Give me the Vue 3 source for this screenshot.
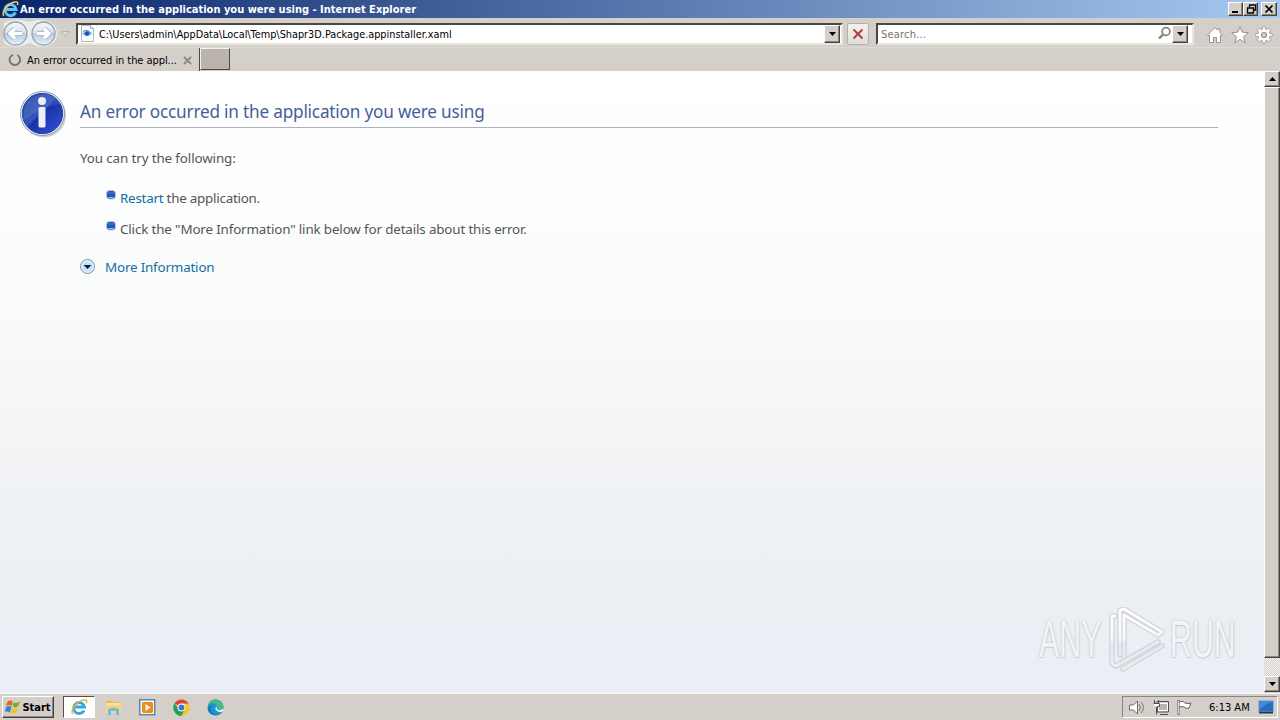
<script setup>
const teeth = [0, 45, 90, 135, 180, 225, 270, 315]
const suggestions = [
  { link: 'Restart', text: ' the application.' },
  { link: '', text: 'Click the "More Information" link below for details about this error.' },
]
</script>

<template>
  <div class="screen">
    <header class="titlebar">
      <svg class="title-ie" width="18" height="18" viewBox="0 0 18 18">
        <path d="M14.5 12.5A5.500 5.500 0 1 1 15 9.500H5" fill="none" stroke="#62c2f4" stroke-width="3" />
        <path d="M3 16C-1 13 8 1 16 2c1 0 1 2 0 3" fill="none" stroke="#f5cf45" stroke-width="1.5" />
      </svg>
      <span class="title-text">An error occurred in the application you were using - Internet Explorer</span>
      <div class="win-buttons">
        <button class="raised win"><svg width="14" height="12"><path d="M3 9h6" stroke="#000" stroke-width="2" /></svg></button>
        <button class="raised win"><svg width="14" height="12"><path d="M5.500 4V2h6v5h-2M5 2h7M3.500 5h6v5h-6zM3 5h7" fill="none" stroke="#000" stroke-width="1.3" /></svg></button>
        <button class="raised win close"><svg width="14" height="12"><path d="M3.500 2.500l7 7m0-7l-7 7" stroke="#000" stroke-width="1.7" /></svg></button>
      </div>
    </header>

    <div class="toolbar">
      <svg class="nav" width="74" height="29" viewBox="0 0 74 29">
        <defs>
          <linearGradient id="navFill" x2="0" y2="1">
            <stop stop-color="#f7f8fa" /><stop offset=".48" stop-color="#dce1e8" />
            <stop offset=".5" stop-color="#bbcbdc" /><stop offset="1" stop-color="#e3f2fb" />
          </linearGradient>
        </defs>
        <path d="M4 5Q15-1 29 4Q44-1 54 7Q61 17 53 25Q43 32 30 25Q15 32 4 25" fill="#eeeded" />
        <g fill="url(#navFill)" stroke="#8ba3b7" stroke-width="1.3">
          <circle cx="15.500" cy="15.500" r="11.500" /><circle cx="43.500" cy="15.500" r="11.500" />
        </g>
        <g fill="none" stroke="#91a7bc" stroke-width="5"><path d="M22 15.500H10m5-5-5 5 5 5M37 15.500h12m-5-5 5 5-5 5" /></g>
        <g fill="none" stroke="#fff" stroke-width="3.600"><path d="M22 15.500H10m5-5-5 5 5 5M37 15.500h12m-5-5 5 5-5 5" /></g>
        <path d="M61.500 13.500h8l-4 5z" fill="#dedbd5" stroke="#b8b5ae" />
      </svg>
      <div class="field address">
        <svg width="16" height="17" viewBox="0 0 16 17">
          <path d="M2.500.500h9l3 3v13h-12z" fill="#f8fbff" stroke="#a8b5c2" />
          <path d="M11.500.500v3h3" fill="#dce8f3" stroke="#a8b5c2" />
          <path d="M3 8.500q5-5 10 0-5 5-10 0" fill="#78b7e8" /><circle cx="8" cy="8.500" r="2.200" fill="#1756a9" />
          <path d="M4 6.500q5-3 8 2" fill="none" stroke="#3c86cf" />
        </svg>
        <span class="address-text">C:\Users\admin\AppData\Local\Temp\Shapr3D.Package.appinstaller.xaml</span>
        <button class="raised drop"><svg width="7" height="4"><path d="M0 0h7L3.500 4z" /></svg></button>
      </div>
      <button class="stop"><svg width="12" height="12"><path d="M1.500 1.500l9 9m0-9l-9 9" stroke="#b83d40" stroke-width="2" /></svg></button>
      <div class="field search">
        <span class="search-text">Search...</span>
        <svg class="lens" width="15" height="15"><circle cx="9" cy="5.500" r="3.900" fill="none" stroke="#85817d" stroke-width="1.700" /><path d="M6 8.500l-4 4" stroke="#85817d" stroke-width="2.400" /></svg>
        <button class="raised drop"><svg width="7" height="4"><path d="M0 0h7L3.500 4z" /></svg></button>
      </div>
      <div class="commands">
        <svg width="18" height="18" viewBox="0 0 18 18"><path d="M1.500 9 9 1.500l2.500 2.600V3h2.500v3.500L16.500 9l-1 1-1-.8v7.300h-4v-5h-3v5h-4V9.200l-1 .8z" fill="#fff" stroke="#969391" /></svg>
        <svg width="18" height="18" viewBox="0 0 18 18"><path d="M9 .8l2.300 5.400 6 .5-4.600 4 1.500 6L9 13.400l-5.200 3.300 1.500-6-4.600-4 6-.5z" fill="#fff" stroke="#969391" /></svg>
        <svg width="18" height="18" viewBox="0 0 18 18">
          <g fill="#fff" stroke="#969391" stroke-width=".9"><rect v-for="a in teeth" :key="a" x="7.300" y=".8" width="3.400" height="4" rx=".8" :transform="`rotate(${a} 9 9)`" /></g>
          <circle cx="9" cy="9" r="5.500" fill="#fff" /><circle cx="9" cy="9" r="2.500" fill="#d5cfca" stroke="#969391" stroke-width="1.200" />
        </svg>
      </div>
    </div>

    <div class="tabs">
      <div class="tab">
        <svg width="14" height="14"><path d="M5 1.800A5.300 5.300 0 1 0 9.200 2" fill="none" stroke="#77736f" stroke-width="1.900" /></svg>
        <span class="tab-text">An error occurred in the appl...</span>
        <svg class="tab-close" width="9" height="9"><path d="M1 1l7 7m0-7l-7 7" stroke="#8e8984" stroke-width="2" /></svg>
      </div>
      <div class="new-tab"></div>
    </div>

    <div class="viewport">
      <main class="page">
        <svg class="info" width="50" height="50" viewBox="0 0 50 50">
          <defs><linearGradient id="infoFill" x2="1" y2="1"><stop stop-color="#2a438f" /><stop offset=".45" stop-color="#3157bd" /><stop offset=".5" stop-color="#1a30a8" /><stop offset="1" stop-color="#3556e0" /></linearGradient></defs>
          <circle cx="24" cy="24.500" r="22" fill="#aaa" opacity=".55" /><circle cx="22.500" cy="22.500" r="22" fill="#f5f8ff" stroke="#8396ba" />
          <circle cx="22.500" cy="22.500" r="20.200" fill="url(#infoFill)" stroke="#244694" />
          <path d="M4 29C1 12 13 3 24 3c9 0 14 5 17 10Q26 14 4 29" fill="#7894da" opacity=".25" />
          <circle cx="22" cy="10" r="4" fill="#eeeff5" /><rect x="18.500" y="16" width="7" height="20.500" rx="1.500" fill="#eeeff5" />
        </svg>
        <div class="content">
          <h1><span>An error occurred in the application you were using</span></h1>
          <p class="intro"><span>You can try the following:</span></p>
          <ul>
            <li v-for="(item, i) in suggestions" :key="i">
              <svg width="10" height="10"><rect x=".5" y=".5" width="9" height="8.500" rx="3" fill="#2455ba" stroke="#b7c9e6" /><path d="M2 3h6" stroke="#4c85d1" /><path d="M2.500 7.500h5" stroke="#86c9f4" /></svg>
              <span :class="i ? 'second' : 'first'"><a v-if="item.link">{{ item.link }}</a>{{ item.text }}</span>
            </li>
          </ul>
          <div class="more">
            <svg width="16" height="16"><circle cx="7.500" cy="7.500" r="7" fill="#c9e2f7" stroke="#758dab" /><circle cx="7.500" cy="7.500" r="5.800" fill="none" stroke="#eff8ff" /><path d="M3.500 6h8l-4 4z" fill="#071f45" /></svg>
            <a>More Information</a>
          </div>
        </div>
      </main>
      <div class="scrollbar">
        <button class="raised arrow"><svg width="7" height="4"><path d="M0 4h7L3.500 0z" /></svg></button>
        <div class="raised thumb"></div><div class="track"></div>
        <button class="raised arrow"><svg width="7" height="4"><path d="M0 0h7L3.500 4z" /></svg></button>
      </div>
      <div class="watermark">
        <span>ANY</span>
        <svg width="60" height="66" viewBox="0 0 60 66">
          <defs><linearGradient id="markFill" gradientUnits="userSpaceOnUse" x1="0" y1="0" x2="0" y2="66"><stop stop-color="#fff" /><stop offset=".5" stop-color="#f7f8fa" /><stop offset=".56" stop-color="#e7e8ed" /><stop offset="1" stop-color="#eff0f4" /></linearGradient></defs>
          <g fill="none" stroke-linecap="round" stroke-linejoin="round">
            <path d="M8 9H5v48l4 2 42-24M13 48V3l4-1 38 23-4 3-34-20v42M16 62l39-23" stroke="#d2d4da" stroke-width="5.500" />
            <path d="M8 9H5v48l4 2 42-24M13 48V3l4-1 38 23-4 3-34-20v42M16 62l39-23" stroke="url(#markFill)" stroke-width="2.800" />
          </g>
        </svg>
        <span>RUN</span>
      </div>
    </div>

    <footer class="taskbar">
      <button class="raised start">
        <svg width="17" height="16" viewBox="0 0 17 16"><path d="M3 2q3-2 5 0L7 7Q4 5 1 7z" fill="#e96124" /><path d="M9 3q3 2 7-1l-2 5q-3 3-6 0z" fill="#78ae28" /><path d="M1 8q3-2 6 0l-2 6q-2-2-5-1z" fill="#3487d1" /><path d="M8 9q3 2 6-1l-2 6q-3 2-6 0z" fill="#f5bd20" /></svg>
        <span>Start</span>
      </button>
      <div class="task active"><svg width="18" height="18" viewBox="0 0 18 18"><path d="M14 12.500A5.500 5.500 0 1 1 14.500 9H5" fill="none" stroke="#35a6e2" stroke-width="2.800" /><path d="M3 16C-1 13 8 1 16 2c1 0 1 2 0 3" fill="none" stroke="#e7b52d" stroke-width="1.500" /></svg></div>
      <div class="task"><svg width="17" height="17" viewBox="0 0 17 17"><path d="M1 4V2h6l1 1h6v3H1z" fill="#e7b85d" /><path d="M1 4h15v10H1z" fill="#f4d77e" /><path d="M3 16v-6q5-3 11 0v6h-3v-4H6v4z" fill="#73bdd9" /><path d="M2 5h13" stroke="#fff1ae" /></svg></div>
      <div class="task"><svg width="17" height="17"><rect x=".75" y=".75" width="15" height="15" fill="#edf3f7" stroke="#467fa9" stroke-width="1.300" /><rect x="3" y="3" width="11" height="11" rx="2" fill="#f18b16" /><path d="M6.500 5v7l5-3.500z" fill="#fff" /></svg></div>
      <div class="task"><svg width="17" height="17" viewBox="0 0 18 18"><path d="M9 9 1.500 4.500A9 9 0 0 1 16.700 5H9z" fill="#df443b" /><path d="M9 9h-4L1.500 4.500A9 9 0 0 0 8.700 18L13 11z" fill="#26a052" /><path d="M9 5h7.700A9 9 0 0 1 8.700 18L13 11z" fill="#f7c525" /><circle cx="9" cy="9" r="4.200" fill="#fff" /><circle cx="9" cy="9" r="3.200" fill="#4075cd" /></svg></div>
      <div class="task"><svg width="17" height="17" viewBox="0 0 18 18"><circle cx="9" cy="9" r="8.500" fill="#147cc2" /><path d="M1 8C2-1 16-2 17.500 8c0 4-5 5-7 3 3-3-2-7-9.500-3" fill="#46bd80" /><path d="M1 8C4 2 11 5 11 9c-3-1-3 4 2 5 2 0 3-.5 4-1-4 5-12 5-13-2Q4 8 6 7 3 6 1 8" fill="#1598ce" /><path d="M10 8q-3 3 1 5 3 2 6 0 1-2 0-3-3 3-6 1" fill="#e7edf0" /></svg></div>
      <div class="tray">
        <svg class="speaker" width="18" height="17"><path d="M1.500 6h4l4-4v13l-4-4h-4z" fill="#fff" stroke="#6d6b68" /><path d="M11 5q3 3.500 0 7M13 3q5 5.500 0 11" fill="none" stroke="#77736f" /></svg>
        <svg class="network" width="18" height="17"><rect x="6.500" y="4.500" width="9" height="7" fill="#b8b6b2" stroke="#fff" /><path d="M5 2.500h11.500V13H6M8 15.500h8M2.500 1v3h4V1M1.500 4.500h6v3h-2v6M4.500 8v7.500" fill="none" stroke="#55534f" /><path d="M2 5h5v2H2z" fill="#fff" /></svg>
        <svg class="flag" width="17" height="17"><path d="M3 3q4-2 6 1 3 1 6 0l-2 5q-3 1-5-1-3-1-5 0" fill="#fff" stroke="#65615d" /><path d="M2.500 1v15" stroke="#65615d" stroke-width="2" /><path d="M2.500 2v13" stroke="#fff" stroke-width=".7" /></svg>
        <span class="time">6:13 AM</span>
        <svg class="desktop" width="16" height="14"><rect x=".5" y=".5" width="15" height="11" fill="#286bc2" stroke="#9db5d0" /><path d="M1 11Q7 3 15 2V1H1z" fill="#4289d8" /><path d="M1 12.500h14" stroke="#173763" stroke-width="2" /></svg>
      </div>
    </footer>
  </div>
</template>

<style>
html, body { margin: 0; overflow: hidden; }
</style>

<style scoped>
* { box-sizing: border-box; }
svg { display: block; flex: none; }
.screen { width: 1280px; height: 720px; display: flex; flex-direction: column; background: #d5cfc9; font: 11px "DejaVu Sans Condensed", "DejaVu Sans", sans-serif; font-stretch: condensed; color: #000; }
button { margin: 0; padding: 0; border-radius: 0; font: inherit; display: flex; align-items: center; justify-content: center; }
.raised { background: #d5cfc9; border: 1px solid; border-color: #fff #45423f #45423f #fff; box-shadow: inset -1px -1px #8b8681; }
.titlebar { height: 18px; display: flex; align-items: center; background: linear-gradient(90deg, #0a246a, #a6caf0); color: #fff; flex: none; }
.title-ie { width: 18px; margin-left: 1px; }
.title-text { width: 397px; font-weight: 700; white-space: nowrap; margin-left: 1px; letter-spacing: .005px; }
.win-buttons { display: flex; margin-left: auto; margin-right: 3px; }
.win { width: 15px; height: 14px; }
.close { margin-left: 3px; width: 16px; }
.toolbar { height: 29px; display: flex; align-items: center; flex: none; }
.nav { margin-right: 2px; }
.field { height: 22px; display: flex; align-items: center; background: #fff; border: 2px solid; border-color: #4b4741 #e9e5df #e9e5df #4b4741; margin-top: 2px; white-space: nowrap; }
.address { width: 767px; padding-left: 1px; }
.address-text { margin: 1px 0 0 4px; font-size: 10.82px; }
.drop { width: 16px; height: 18px; margin-left: auto; }
.address .drop { margin-right: 1px; }
.stop { width: 22px; height: 22px; margin: 2px 7px 0 4px; background: linear-gradient(#f3f1ee, #e1deda); border: 1px solid #b6b0aa; border-radius: 2px; }
.search { width: 318px; padding-left: 3px; padding-right: 4px; color: #77736f; }
.search-text { margin-top: 1px; letter-spacing: .2px; }
.lens { margin-left: auto; }
.search .drop { margin-left: 0; }
.commands { display: flex; margin: 5px 0 0 12px; gap: 6.5px; }
.tabs { height: 24px; flex: none; display: flex; border-top: 1px solid #ded9d4; }
.tab { display: flex; align-items: center; width: 200px; padding-left: 8px; border-right: 1px solid #4b4744; }
.tab-text { width: 156px; margin: 1px 0 0 5px; white-space: nowrap; letter-spacing: -.07px; }
.tab-close { margin-top: 1px; }
.new-tab { width: 30px; height: 22px; border: 1px solid; border-color: #f4f0ec #4b4744 #4b4744 #f4f0ec; background: #bbb3ad; }
.viewport { position: relative; height: 622px; flex: none; display: flex; }
.page { width: 1264px; padding: 20px 46px 0 20px; display: flex; background: linear-gradient(#fff 0%, #fafbfb 38%, #f1f3f5 63%, #ebeff3 84%, #ebeef6 100%); font-family: "Noto Sans", sans-serif; color: #555; }
.content { flex: 1; margin-left: 10px; }
h1 { margin: 0; height: 37px; border-bottom: 1px solid #a9b2bf; font-size: 17.2px; font-weight: 400; line-height: 42px; color: #465e98; white-space: nowrap; letter-spacing: -.2px; }
.intro { margin: 20px 0 0; font-size: 13.4px; line-height: 20px; letter-spacing: -.12px; }
ul { list-style: none; margin: 20px 0 0 27px; padding: 0; font-size: 13.4px; }
li { height: 31px; display: flex; gap: 3px; line-height: 20px; white-space: nowrap; }
li svg { margin-top: 2px; margin-left: -1px; }
li span { margin-left: 1px; letter-spacing: -.15px; }
li .first { letter-spacing: -.24px; }
a { color: #126fa4; }
.more { display: flex; align-items: center; height: 20px; margin-top: 7px; font-size: 13.4px; letter-spacing: -.18px; }
.more a { margin-left: 9px; }
.scrollbar { width: 16px; display: flex; flex-direction: column; background: #d5cfc9; padding-bottom: 1px; }
.arrow { width: 16px; height: 16px; flex: none; }
.thumb { height: 571px; }
.track { height: 18px; background: repeating-conic-gradient(#d5cfc9 0% 25%, #f5f3f0 0% 50%) 0 0 / 2px 2px; }
.watermark { position: absolute; left: 1039px; top: 535px; display: flex; align-items: center; width: 197px; height: 68px; color: #f3f4f7; text-shadow: 0 0 3px #b9bdc5, 1px 1px 1px #ced1d7; font: 51px/56px "Liberation Sans", sans-serif; }
.watermark span { display: block; width: 64px; transform: scaleX(.595); transform-origin: left center; white-space: nowrap; }
.watermark svg { width: 60px; margin: 0 3px 0 4px; }
.taskbar { height: 27px; flex: none; display: flex; align-items: center; border-top: 1px solid #f9f7f4; padding: 0 2px; }
.start { width: 52px; height: 22px; font-weight: 700; gap: 1px; }
.start svg { width: 16px; }
.task { width: 34px; height: 22px; display: flex; align-items: center; justify-content: center; }
.task.active { width: 32px; margin: 0 1px 0 9px; background: #fff; border: 1px solid; border-color: #55514e #fff #fff #55514e; }
.tray { margin-left: auto; width: 156px; height: 22px; display: flex; align-items: center; padding: 0 3px 0 5px; border: 1px solid; border-color: #8b8681 #fff #fff #8b8681; }
.network { margin-left: 6px; }
.flag { margin-left: 6px; }
.time { margin-left: 16px; width: 41px; white-space: nowrap; }
.desktop { margin-left: auto; }
</style>
